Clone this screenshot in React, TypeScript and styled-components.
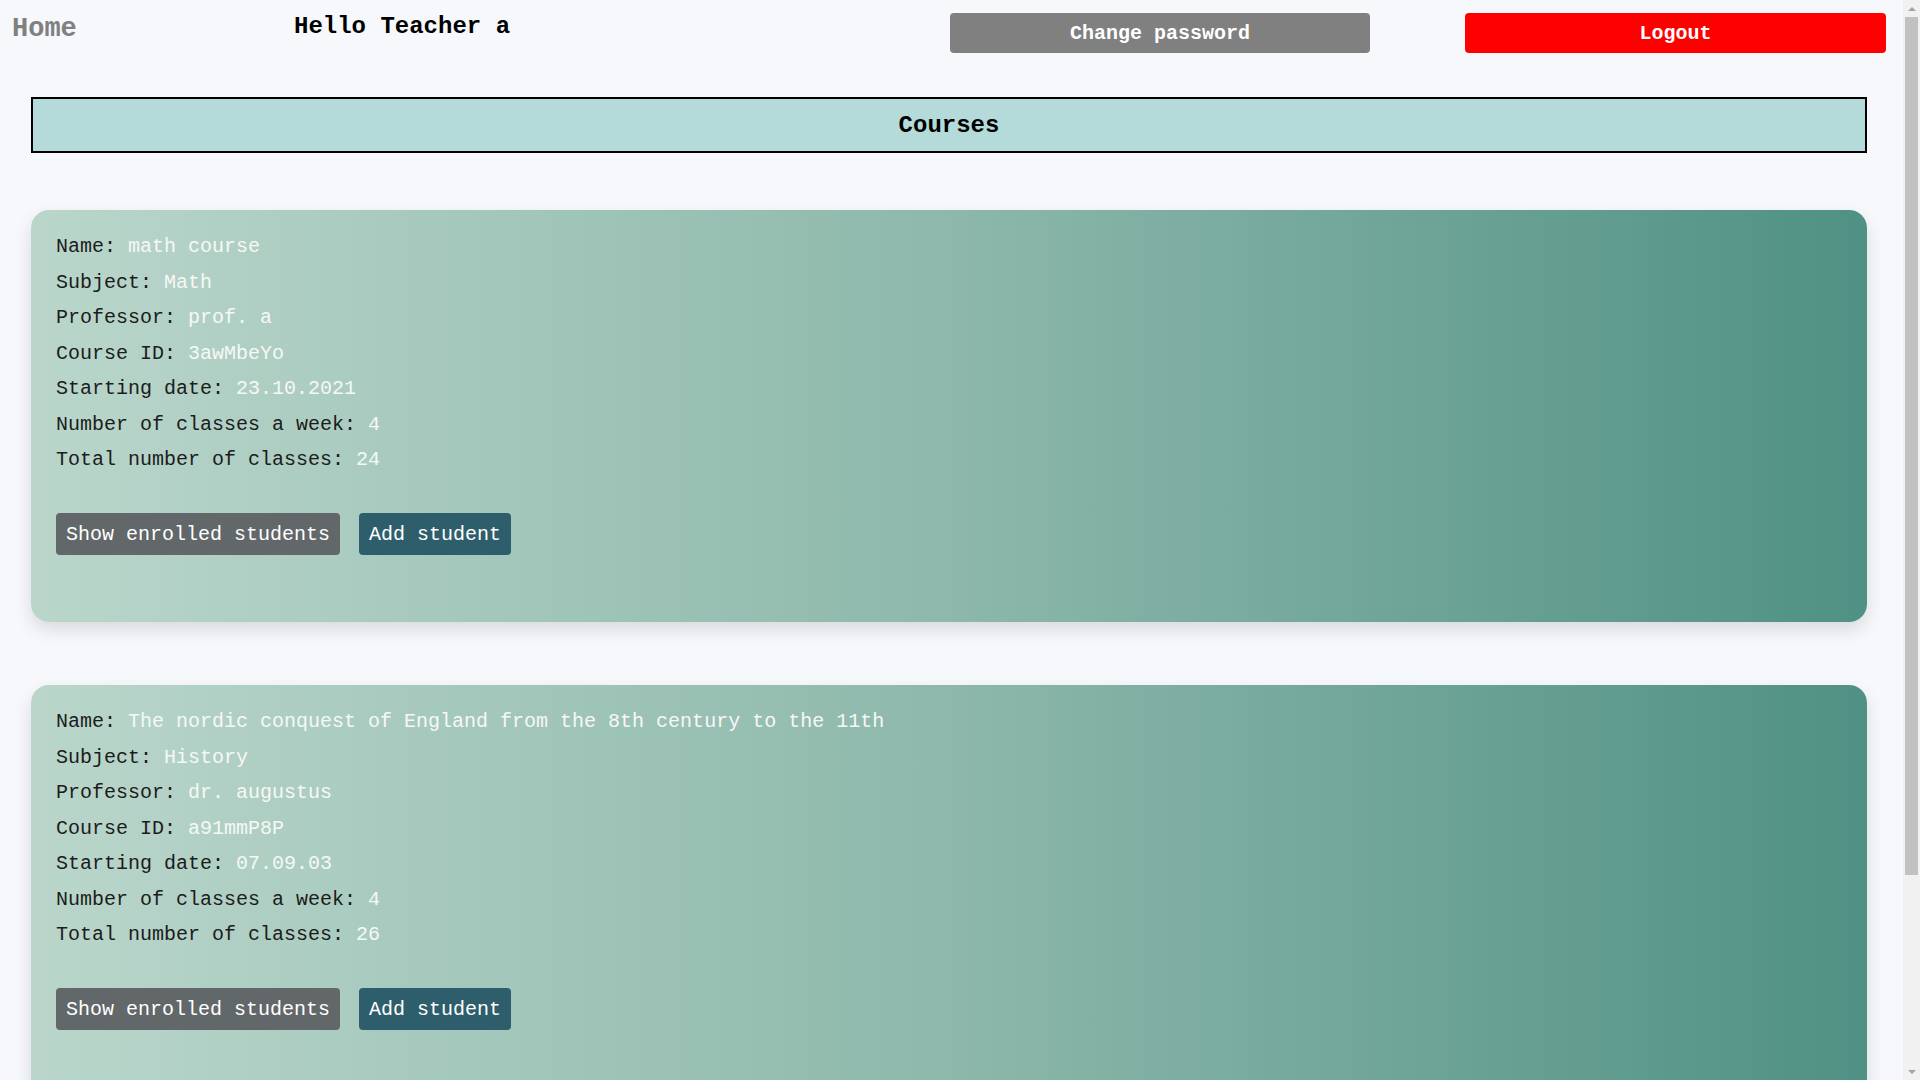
import React from "react";
import styled, { createGlobalStyle } from "styled-components";

const GlobalStyle = createGlobalStyle`
  html, body {
    margin: 0;
    padding: 0;
    background: #f7f8fc;
    font-family: "Liberation Mono", "Courier New", monospace;
  }
  * { box-sizing: border-box; }
`;

const Page = styled.div`
  padding-right: 17px;
`;

const NavBar = styled.header`
  display: flex;
  align-items: flex-start;
  height: 66px;
  padding: 0 17px 0 12px;
`;

const HomeLink = styled.a`
  width: 282px;
  margin-top: 12px;
  line-height: 34px;
  font-size: 27px;
  font-weight: bold;
  color: #808080;
  text-decoration: none;
  cursor: pointer;
`;

const Greeting = styled.h2`
  flex: 1;
  margin: 10px 0 0;
  line-height: 34px;
  font-size: 24px;
  font-weight: bold;
  color: #000;
`;

const NavButton = styled.button<{ $variant: "gray" | "red" }>`
  width: ${(p) => (p.$variant === "gray" ? "420px" : "421px")};
  height: 40px;
  margin-top: 13px;
  margin-right: ${(p) => (p.$variant === "gray" ? "95px" : "0")};
  border: none;
  border-radius: 4px;
  background: ${(p) => (p.$variant === "gray" ? "#808080" : "#ff0000")};
  color: #fff;
  font-family: "Liberation Mono", "Courier New", monospace;
  font-size: 20px;
  font-weight: bold;
  cursor: pointer;
`;

const Main = styled.main`
  padding: 31px 36px 40px 31px;
  display: flex;
  flex-direction: column;
`;

const SectionTitle = styled.div`
  height: 56px;
  border: 2px solid #000;
  background: #b4dbd9;
  display: flex;
  align-items: center;
  justify-content: center;
  font-size: 24px;
  font-weight: bold;
  color: #000;
  margin-bottom: 57px;
`;

const CourseList = styled.div`
  display: flex;
  flex-direction: column;
  gap: 63px;
`;

const Card = styled.section`
  height: 412px;
  border-radius: 18px;
  padding: 19px 20px 0 25px;
  background: linear-gradient(to right, #bad6cb 0%, #8db8ab 50%, #4f9184 100%);
  box-shadow: 0 8px 18px rgba(0, 0, 0, 0.12);
`;

const InfoRow = styled.p`
  margin: 0;
  line-height: 35.5px;
  font-size: 20px;
  color: #1c1c1c;
  white-space: pre;
`;

const Value = styled.span`
  color: #f6f8f6;
`;

const Actions = styled.div`
  display: flex;
  gap: 19px;
  margin-top: 35px;
`;

const CardButton = styled.button<{ $tone: "gray" | "teal" }>`
  height: 42px;
  padding: 1px 10px 0;
  border: none;
  border-radius: 4px;
  background: ${(p) => (p.$tone === "gray" ? "#62676a" : "#2e5e6c")};
  color: #fff;
  font-family: "Liberation Mono", "Courier New", monospace;
  font-size: 20px;
  cursor: pointer;
`;

const ScrollTrack = styled.div`
  position: fixed;
  top: 0;
  right: 0;
  width: 17px;
  height: 100vh;
  background: #f1f1f1;
  display: flex;
  flex-direction: column;
  align-items: center;
`;

const ScrollArrow = styled.div<{ $dir: "up" | "down" }>`
  width: 17px;
  height: 17px;
  display: flex;
  align-items: center;
  justify-content: center;
  flex-shrink: 0;
  &::before {
    content: "";
    border-left: 4px solid transparent;
    border-right: 4px solid transparent;
    ${(p) =>
      p.$dir === "up"
        ? "border-bottom: 4px solid #a3a3a3;"
        : "border-top: 4px solid #a3a3a3;"}
  }
`;

const ScrollThumb = styled.div`
  width: 13px;
  height: 858px;
  background: #c1c1c1;
`;

const ScrollSpacer = styled.div`
  flex: 1;
`;

type Course = {
  name: string;
  subject: string;
  professor: string;
  id: string;
  start: string;
  perWeek: number;
  total: number;
};

const courses: Course[] = [
  {
    name: "math course",
    subject: "Math",
    professor: "prof. a",
    id: "3awMbeYo",
    start: "23.10.2021",
    perWeek: 4,
    total: 24,
  },
  {
    name: "The nordic conquest of England from the 8th century to the 11th",
    subject: "History",
    professor: "dr. augustus",
    id: "a91mmP8P",
    start: "07.09.03",
    perWeek: 4,
    total: 26,
  },
];

function CourseCard({ c }: { c: Course }) {
  const rows: [string, string | number][] = [
    ["Name", c.name],
    ["Subject", c.subject],
    ["Professor", c.professor],
    ["Course ID", c.id],
    ["Starting date", c.start],
    ["Number of classes a week", c.perWeek],
    ["Total number of classes", c.total],
  ];
  return (
    <Card>
      {rows.map(([label, value]) => (
        <InfoRow key={label}>
          {label}: <Value>{value}</Value>
        </InfoRow>
      ))}
      <Actions>
        <CardButton $tone="gray">Show enrolled students</CardButton>
        <CardButton $tone="teal">Add student</CardButton>
      </Actions>
    </Card>
  );
}

export default function App() {
  return (
    <>
      <GlobalStyle />
      <Page>
        <NavBar>
          <HomeLink>Home</HomeLink>
          <Greeting>Hello Teacher a</Greeting>
          <NavButton $variant="gray">Change password</NavButton>
          <NavButton $variant="red">Logout</NavButton>
        </NavBar>
        <Main>
          <SectionTitle>Courses</SectionTitle>
          <CourseList>
            {courses.map((c) => (
              <CourseCard key={c.id} c={c} />
            ))}
          </CourseList>
        </Main>
      </Page>
      <ScrollTrack>
        <ScrollArrow $dir="up" />
        <ScrollThumb />
        <ScrollSpacer />
        <ScrollArrow $dir="down" />
      </ScrollTrack>
    </>
  );
}
